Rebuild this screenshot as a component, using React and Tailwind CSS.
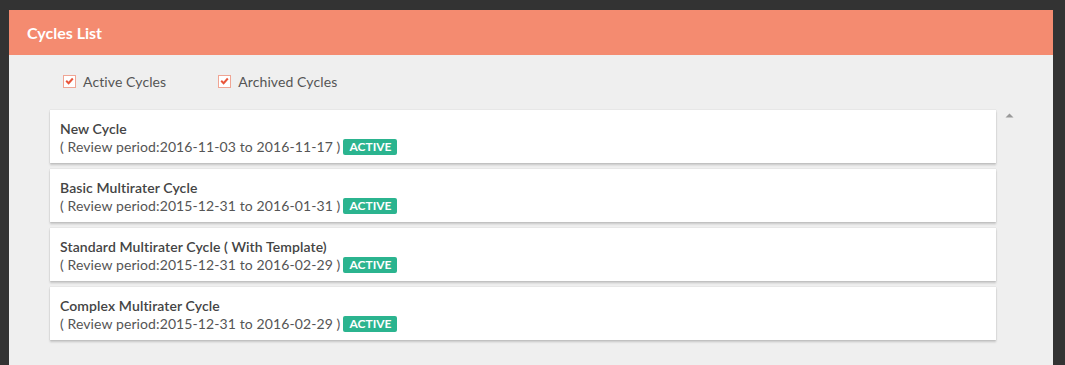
const cycles = [
  { name: "New Cycle", from: "2016-11-03", to: "2016-11-17" },
  { name: "Basic Multirater Cycle", from: "2015-12-31", to: "2016-01-31" },
  { name: "Standard Multirater Cycle ( With Template)", from: "2015-12-31", to: "2016-02-29" },
  { name: "Complex Multirater Cycle", from: "2015-12-31", to: "2016-02-29" },
];

function Check() {
  return (
    <span className="w-[13px] h-[13px] border border-[#f0a594] bg-white flex items-center justify-center">
      <svg width="9" height="8" viewBox="0 0 9 8">
        <path d="M1.2 3.8 L3.6 6.2 L7.8 1.5" fill="none" stroke="#e8553a" strokeWidth="2" />
      </svg>
    </span>
  );
}

export default function App() {
  return (
    <div className="w-[1065px] h-[365px] bg-[#333333] overflow-hidden font-['Lato','Open_Sans',sans-serif] pt-[10px] pl-[9px]">
      <div className="w-[1044px] h-[400px] bg-[#efefef]">
        <div className="h-[45px] bg-[#f48b70] flex items-center px-[18px]">
          <span className="text-white text-[16px] font-bold">Cycles List</span>
        </div>
        <div className="flex items-center h-[55px] pl-[54px] pb-[3px] text-[14px] text-[#555] tracking-[0.1px]">
          <label className="flex items-center gap-[7px] mr-[52px]">
            <Check />
            <span>Active Cycles</span>
          </label>
          <label className="flex items-center gap-[7px]">
            <Check />
            <span>Archived Cycles</span>
          </label>
        </div>
        <div className="flex">
          <div className="ml-[41px] w-[946px] flex flex-col gap-[6px]">
            {cycles.map((c) => (
              <div
                key={c.name}
                className="bg-white h-[53px] px-[10px] pt-[10px] shadow-[0_2px_2px_rgba(0,0,0,0.18),0_0_1px_rgba(0,0,0,0.2)] text-[14px] text-[#555] tracking-[0.1px]"
              >
                <div className="font-semibold leading-[18px] text-[#444]">{c.name}</div>
                <div className="flex items-center leading-[18px]">
                  <span>( Review period:{c.from} to {c.to} )</span>
                  <span className="ml-[3px] bg-[#2bb48f] text-white text-[12px] font-bold leading-[16px] px-[6px] rounded-[2px] tracking-normal">ACTIVE</span>
                </div>
              </div>
            ))}
          </div>
          <div className="ml-[9px] pt-[3px]">
            <svg width="9" height="5" viewBox="0 0 9 5">
              <path d="M0.5 4.5 L4.5 0.5 L8.5 4.5 Z" fill="#999" />
            </svg>
          </div>
        </div>
      </div>
    </div>
  );
}
